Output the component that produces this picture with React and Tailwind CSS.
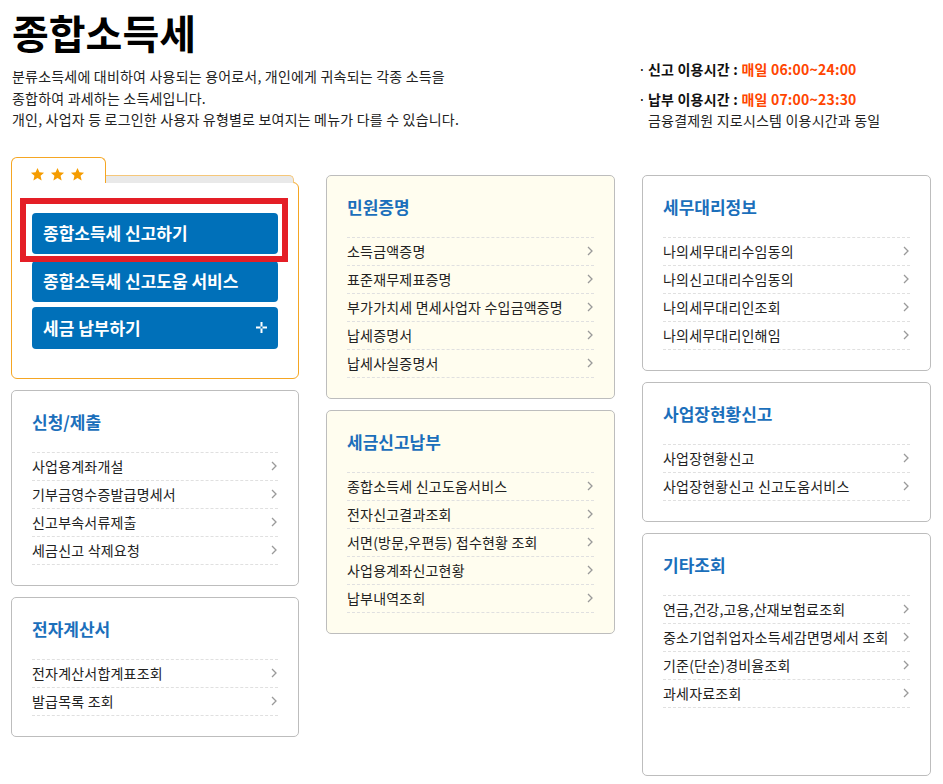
import React from "react";

const groups = {
  left: [
    {
      title: "신청/제출",
      items: ["사업용계좌개설", "기부금영수증발급명세서", "신고부속서류제출", "세금신고 삭제요청"],
    },
    { title: "전자계산서", items: ["전자계산서합계표조회", "발급목록 조회"] },
  ],
  middle: [
    {
      title: "민원증명",
      items: ["소득금액증명", "표준재무제표증명", "부가가치세 면세사업자 수입금액증명", "납세증명서", "납세사실증명서"],
    },
    {
      title: "세금신고납부",
      items: ["종합소득세 신고도움서비스", "전자신고결과조회", "서면(방문,우편등) 접수현황 조회", "사업용계좌신고현황", "납부내역조회"],
    },
  ],
  right: [
    {
      title: "세무대리정보",
      items: ["나의세무대리수임동의", "나의신고대리수임동의", "나의세무대리인조회", "나의세무대리인해임"],
    },
    { title: "사업장현황신고", items: ["사업장현황신고", "사업장현황신고 신고도움서비스"] },
    {
      title: "기타조회",
      items: ["연금,건강,고용,산재보험료조회", "중소기업취업자소득세감면명세서 조회", "기준(단순)경비율조회", "과세자료조회"],
      tall: true,
    },
  ],
};

function Chevron() {
  return (
    <svg width="6" height="10" viewBox="0 0 6 10" className="shrink-0">
      <polyline points="1,1 5,5 1,9" fill="none" stroke="#9a9a9a" strokeWidth="1.3" />
    </svg>
  );
}

function Star() {
  return (
    <svg width="15" height="15" viewBox="0 0 24 24">
      <path
        d="M12 1.5l3.1 6.9 7.4.7-5.6 5 1.7 7.4L12 17.6l-6.6 3.9 1.7-7.4-5.6-5 7.4-.7z"
        fill="#f59c00"
      />
    </svg>
  );
}

function Plus() {
  return (
    <svg width="11" height="11" viewBox="0 0 11 11">
      <path d="M5.5 0v4.5M5.5 6.5V11M0 5.5h4.5M6.5 5.5H11" stroke="#fff" strokeWidth="2" />
    </svg>
  );
}

function MenuBox({ title, items, cream, tall }) {
  return (
    <div
      className={`w-full rounded-[5px] border border-[#bdbdbd] px-[20px] pt-[19px] pb-[20px] ${
        cream ? "bg-[#fffdef]" : "bg-white"
      } ${tall ? "h-[243px]" : ""}`}
    >
      <p className="h-[24px] leading-[24px] text-[17px] font-bold text-[#1b6fbb] mb-[18px]">{title}</p>
      <ul className="border-t border-dashed border-[#e0e0e0]">
        {items.map((item, i) => (
          <li
            key={i}
            className="h-[28px] border-b border-dashed border-[#e0e0e0] flex items-center justify-between pr-[1px] text-[14px] tracking-[0.2px] text-[#222]"
          >
            <span className="whitespace-nowrap">{item}</span>
            <Chevron />
          </li>
        ))}
      </ul>
    </div>
  );
}

function QuickPanel() {
  return (
    <div className="w-full">
      <div className="flex items-end -mb-px">
        <div className="relative z-10 w-[95px] h-[26px] border border-b-0 border-[#f5a623] rounded-t-[6px] bg-white flex items-end gap-[5px] pl-[18px] pb-[1px]">
          <Star />
          <Star />
          <Star />
        </div>
        <div className="w-[189px] h-[8px] -ml-px bg-[#e9e9e9] border-t border-r border-[#f5c77a] rounded-tr-[5px]"></div>
      </div>
      <div className="border border-[#f5a623] rounded-b-[6px] rounded-tr-[6px] bg-white px-[20px] pt-[30px] pb-[29px]">
        <div className="relative">
          <button className="w-full h-[41px] rounded-[4px] bg-[#0070b9] pl-[11px] text-left text-white font-bold text-[17px]">
            종합소득세 신고하기
          </button>
          <div className="absolute -left-[12px] -top-[15px] -right-[10px] -bottom-[8px] border-[6px] border-[#e41e26]"></div>
        </div>
        <button className="w-full h-[41px] mt-[7px] rounded-[4px] bg-[#0070b9] pl-[11px] text-left text-white font-bold text-[17px]">
          종합소득세 신고도움 서비스
        </button>
        <button className="w-full h-[42px] mt-[5px] rounded-[4px] bg-[#0070b9] pl-[11px] pr-[11px] flex items-center justify-between text-white font-bold text-[17px]">
          <span>세금 납부하기</span>
          <Plus />
        </button>
      </div>
    </div>
  );
}

export default function App() {
  return (
    <div
      className="w-[943px] h-[784px] bg-white text-[#111] overflow-hidden"
      style={{ fontFamily: "'Noto Sans CJK KR', 'Noto Sans', sans-serif" }}
    >
      <div className="flex">
        <div className="w-[638px] pl-[12px]">
          <h1 className="mt-[9px] text-[40px] leading-[46px] font-bold text-black">종합소득세</h1>
          <div className="mt-[11px] text-[14px] tracking-[0.2px] leading-[21.5px] text-[#222]">
            <p>분류소득세에 대비하여 사용되는 용어로서, 개인에게 귀속되는 각종 소득을</p>
            <p>종합하여 과세하는 소득세입니다.</p>
            <p>개인, 사업자 등 로그인한 사용자 유형별로 보여지는 메뉴가 다를 수 있습니다.</p>
          </div>
        </div>
        <div className="pt-[59px] text-[14px] tracking-[0.2px] leading-[21.5px]">
          <p className="font-bold text-[#111]">
            <span className="inline-block w-[10px] font-normal">·</span>신고 이용시간 :{" "}
            <span className="text-[#ff4500]">매일 06:00~24:00</span>
          </p>
          <p className="mt-[8px] font-bold text-[#111]">
            <span className="inline-block w-[10px] font-normal">·</span>납부 이용시간 :{" "}
            <span className="text-[#ff4500]">매일 07:00~23:30</span>
          </p>
          <p className="pl-[10px] text-[#222]">금융결제원 지로시스템 이용시간과 동일</p>
        </div>
      </div>

      <div className="flex items-start gap-[27px] pl-[11px] mt-[25px]">
        <div className="w-[288px] flex flex-col gap-[11px]">
          <QuickPanel />
          {groups.left.map((g, i) => (
            <MenuBox key={i} {...g} />
          ))}
        </div>
        <div className="w-[289px] mt-[18px] flex flex-col gap-[11px]">
          {groups.middle.map((g, i) => (
            <MenuBox key={i} {...g} cream />
          ))}
        </div>
        <div className="w-[289px] mt-[18px] flex flex-col gap-[11px]">
          {groups.right.map((g, i) => (
            <MenuBox key={i} {...g} />
          ))}
        </div>
      </div>
    </div>
  );
}
